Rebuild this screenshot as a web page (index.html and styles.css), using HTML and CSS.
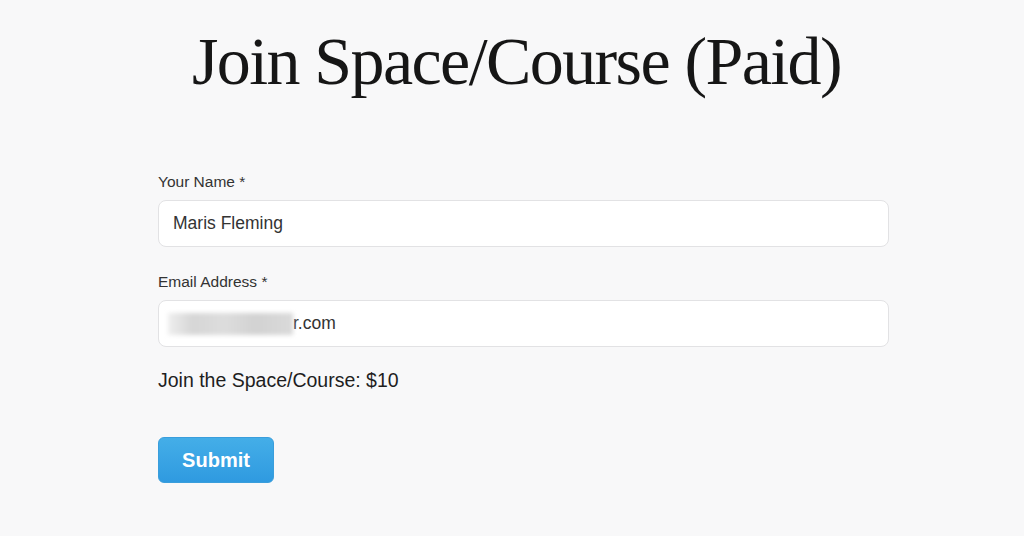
FILE: index.html
```html
<!DOCTYPE html>
<html lang="en">
<head>
<meta charset="utf-8">
<title>Join Space/Course (Paid)</title>
<link rel="stylesheet" href="styles.css">
</head>
<body>
<main class="page">
  <h1 class="title">Join Space/Course (Paid)</h1>
  <form class="form">
    <label class="label" for="name">Your Name *</label>
    <div class="field"><input class="input" id="name" type="text" value="Maris Fleming"></div>
    <label class="label" for="email">Email Address *</label>
    <div class="field">
      <div class="input email-box"><span class="redact"></span><span class="email-tail">r.com</span></div>
    </div>
    <p class="price">Join the Space/Course: $10</p>
    <button class="submit" type="button">Submit</button>
  </form>
</main>
</body>
</html>
```

FILE: styles.css
```css
html, body {
  margin: 0;
  padding: 0;
  background: #f8f8f9;
}
.page {
  width: 1024px;
  height: 536px;
  overflow: hidden;
}
.title {
  margin: 0;
  padding: 23px 0 0 9px;
  text-align: center;
  font-family: "Liberation Serif", "Times New Roman", serif;
  font-weight: normal;
  font-size: 68px;
  line-height: 76px;
  letter-spacing: -1.6px;
  color: #161616;
}
.form {
  margin: 74px 0 0 158px;
  width: 731px;
  font-family: "Liberation Sans", Arial, sans-serif;
}
.label {
  display: block;
  font-size: 15.5px;
  line-height: 18px;
  color: #333;
  margin-bottom: 9px;
}
.field {
  margin-bottom: 26px;
}
.input {
  display: flex;
  align-items: center;
  box-sizing: border-box;
  width: 100%;
  height: 47px;
  margin: 0;
  padding: 0 14px;
  border: 1px solid #e2e2e4;
  border-radius: 8px;
  background: #fff;
  font-family: "Liberation Sans", Arial, sans-serif;
  font-size: 17.5px;
  color: #333;
  outline: none;
}
.email-box {
  padding-left: 9px;
}
.redact {
  display: inline-block;
  width: 125px;
  height: 22px;
  background: linear-gradient(90deg, #eeeeee 0%, #d6d6d6 20%, #dddddd 45%, #d2d2d2 70%, #dadada 100%);
  filter: blur(2px);
}
.email-tail {
  color: #333;
}
.price {
  margin: -5px 0 0;
  font-size: 19.5px;
  line-height: 24px;
  color: #1e1e1e;
}
.submit {
  display: block;
  margin-top: 45px;
  width: 116px;
  height: 46px;
  border: 1px solid #3a9edc;
  border-radius: 6px;
  background: linear-gradient(180deg, #44aee8 0%, #2f9ae0 100%);
  color: #fff;
  font-family: "Liberation Sans", Arial, sans-serif;
  font-weight: bold;
  font-size: 20px;
  cursor: pointer;
}
```
